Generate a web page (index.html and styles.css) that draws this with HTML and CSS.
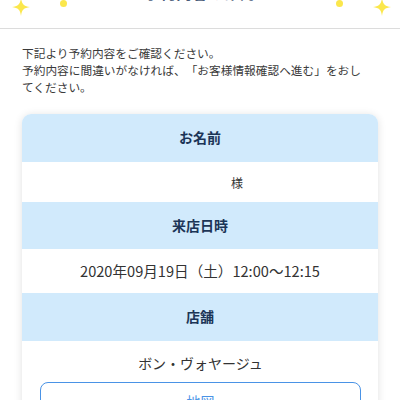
FILE: index.html
```html
<!DOCTYPE html>
<html lang="ja">
<head>
<meta charset="utf-8">
<link rel="stylesheet" href="styles.css">
</head>
<body>
<header class="top">
  <svg class="sparkle sparkle-l" viewBox="0 0 20 20"><path d="M10 0 C11 7 13 9 20 10 C13 11 11 13 10 20 C9 13 7 11 0 10 C7 9 9 7 10 0 Z"/></svg>
  <span class="dot dot-l"></span>
  <h1 class="title">予約内容の確認</h1>
  <span class="dot dot-r"></span>
  <svg class="sparkle sparkle-r" viewBox="0 0 20 20"><path d="M10 0 C11 7 13 9 20 10 C13 11 11 13 10 20 C9 13 7 11 0 10 C7 9 9 7 10 0 Z"/></svg>
</header>
<main class="content">
  <p class="intro">下記より予約内容をご確認ください。<br>予約内容に間違いがなければ、「お客様情報確認へ進む」をおしてください。</p>
  <section class="card">
    <div class="head">お名前</div>
    <div class="row row-name"><span class="name-suffix">様</span></div>
    <div class="head">来店日時</div>
    <div class="row row-date">2020年09月19日（土）12:00〜12:15</div>
    <div class="head">店舗</div>
    <div class="row row-shop">
      <div class="shop-name">ボン・ヴォヤージュ</div>
      <button class="map-btn">地図</button>
    </div>
  </section>
</main>
</body>
</html>
```

FILE: styles.css
```css
html, body {
  margin: 0;
  padding: 0;
  background: #fff;
  font-family: "Noto Sans CJK JP", "Noto Sans", sans-serif;
  color: #333;
  text-spacing-trim: space-all;
}

.top {
  position: relative;
  height: 28px;
  border-bottom: 1px solid #dcdcdc;
  overflow: hidden;
  display: flex;
  justify-content: center;
}

.title {
  margin: -18px 0 0;
  font-size: 16px;
  line-height: 20px;
  font-weight: bold;
  color: #4a5b7a;
  height: 20px;
}

.sparkle {
  position: absolute;
  width: 18px;
  height: 18px;
  top: -2px;
  fill: #fbe74c;
}
.sparkle-l { left: 12px; }
.sparkle-r { left: 373px; }

.dot {
  position: absolute;
  width: 7px;
  height: 7px;
  border-radius: 50%;
  background: #fbe74c;
  top: 0;
}
.dot-l { left: 60px; }
.dot-r { left: 336px; }

.content {
  padding: 15px 22px 20px;
}

.intro {
  margin: 0 12px 19px 0;
  font-size: 11.7px;
  line-height: 17px;
  color: #3a3a3a;
}

.card {
  border-radius: 9px;
  overflow: hidden;
  box-shadow: 0 1px 8px rgba(0, 0, 0, 0.12);
  background: #fff;
}

.head {
  background: #d1eafc;
  color: #1c3557;
  font-weight: bold;
  font-size: 14px;
  text-align: center;
  height: 47.5px;
  line-height: 47.5px;
}

.row {
  background: #fff;
  text-align: center;
  font-size: 14px;
  line-height: 44px;
  height: 44px;
  color: #333;
}

.row-date {
  font-size: 14.6px;
}

.row-name {
  height: 40px;
  line-height: 42px;
  font-size: 12px;
}
.name-suffix {
  margin-left: 74px;
}

.row-shop {
  height: auto;
  padding: 0 17px 16px 18px;
  line-height: normal;
}
.shop-name {
  height: 41px;
  line-height: 45px;
}

.map-btn {
  display: block;
  width: 100%;
  height: 38px;
  border: 1.5px solid #4a93e6;
  border-radius: 8px;
  background: #fff;
  color: #4a93e6;
  font-family: inherit;
  font-size: 14px;
}
```
